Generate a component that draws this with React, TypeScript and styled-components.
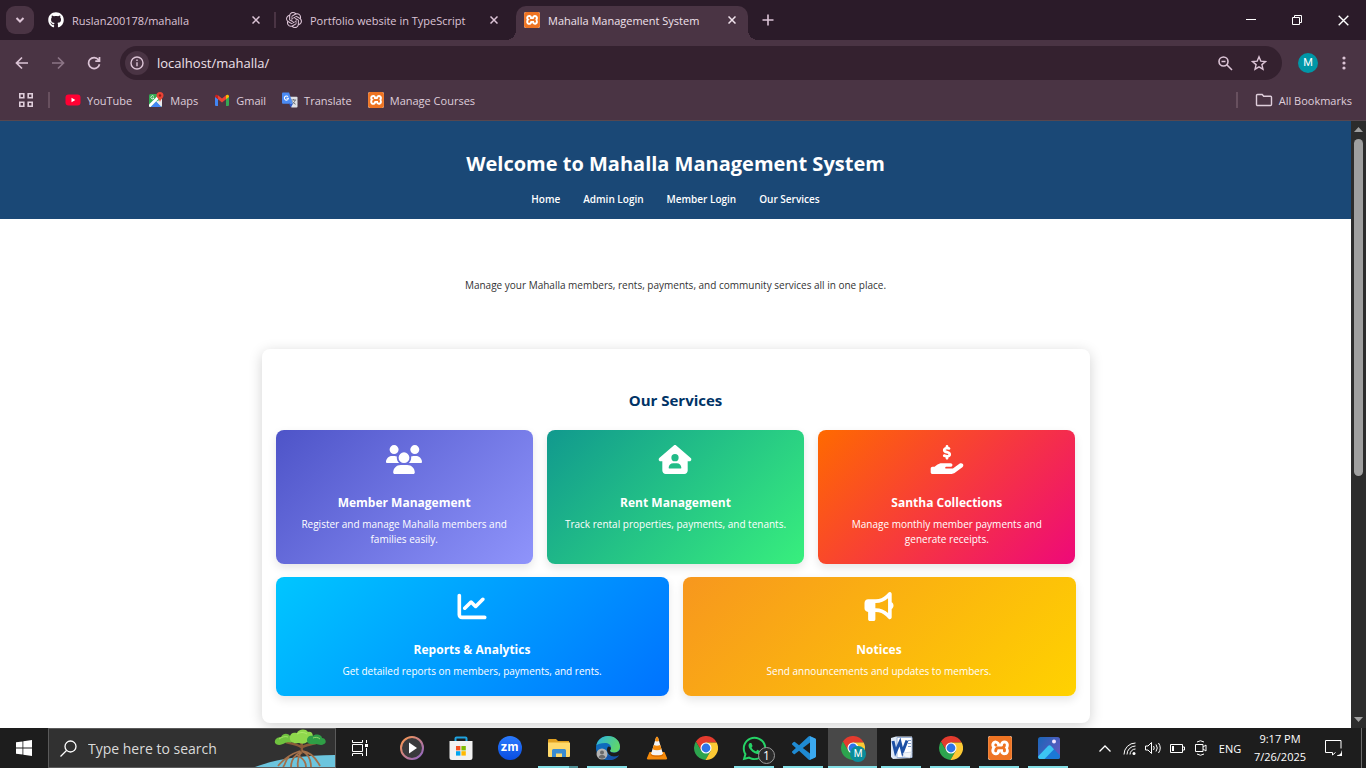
import React from "react";
import styled, { createGlobalStyle, css } from "styled-components";
import {
  FaUsers,
  FaHouseUser,
  FaHandHoldingDollar,
  FaChartLine,
  FaBullhorn,
  FaGithub,
  FaWhatsapp,
} from "react-icons/fa6";
import { SiOpenai, SiXampp } from "react-icons/si";

const uiFont = `"Open Sans", "Noto Sans", sans-serif`;

const GlobalStyle = createGlobalStyle`
  * { box-sizing: border-box; }
  body { margin: 0; background: #fff; font-family: ${uiFont}; }
  button, input { font-family: inherit; }
  button { border: 0; padding: 0; background: none; color: inherit; display: flex; align-items: center; justify-content: center; flex: none; }
  svg { display: block; flex: none; }
  h1, h2, h3, p { margin: 0; }
`;

const Desktop = styled.div`
  display: flex;
  flex-direction: column;
  height: 100vh;
  overflow: hidden;
`;

/* ---------- browser window ---------- */

const TabStrip = styled.div`
  display: flex;
  align-items: flex-end;
  height: 40px;
  flex: none;
  padding-left: 6px;
  background: #2b1b29;
  color: #dcc4d6;
`;

const TabSearch = styled.button`
  width: 28px;
  height: 28px;
  margin: 0 6px 6px 0;
  border-radius: 9px;
  background: #4a3444;
`;

const Tab = styled.div<{ $active?: boolean; $divided?: boolean }>`
  position: relative;
  display: flex;
  align-items: center;
  width: 232px;
  height: 34px;
  margin-right: 6px;
  padding: 0 8px 6px;
  gap: 8px;
  font-size: 11px;
  white-space: nowrap;
  ${(p) =>
    p.$active &&
    css`
      background: #4a3444;
      color: #f0e2ec;
      border-radius: 10px 10px 0 0;
      &::before,
      &::after {
        content: "";
        position: absolute;
        bottom: 0;
        width: 10px;
        height: 10px;
      }
      &::before {
        left: -10px;
        background: radial-gradient(circle at 0 0, transparent 10px, #4a3444 10px);
      }
      &::after {
        right: -10px;
        background: radial-gradient(circle at 100% 0, transparent 10px, #4a3444 10px);
      }
    `}
  ${(p) =>
    p.$divided &&
    css`
      &::after {
        content: "";
        position: absolute;
        right: -4px;
        top: 6px;
        width: 2px;
        height: 16px;
        background: #4a3444;
      }
    `}
`;

const TabTitle = styled.span`
  flex: 1;
  overflow: hidden;
`;

const TabClose = styled.button`
  width: 16px;
  height: 16px;
`;

const NewTab = styled.button`
  width: 28px;
  height: 28px;
  margin-bottom: 6px;
`;

const WindowControls = styled.div`
  display: flex;
  margin-left: auto;
  align-self: stretch;
  color: #fff;
  button {
    width: 46px;
  }
`;

const Toolbar = styled.div`
  display: flex;
  align-items: center;
  height: 46px;
  flex: none;
  padding: 0 4px;
  background: #4a3444;
  color: #dcc4d6;
`;

const ToolButton = styled.button<{ $dim?: boolean }>`
  width: 36px;
  height: 34px;
  opacity: ${(p) => (p.$dim ? 0.45 : 1)};
`;

const Omnibox = styled.div`
  display: flex;
  align-items: center;
  flex: 1;
  height: 34px;
  margin: 0 8px;
  padding: 0 7px 0 5px;
  border-radius: 17px;
  background: #34212f;
`;

const SiteInfo = styled.button`
  width: 24px;
  height: 24px;
  border-radius: 50%;
  background: #4a3444;
`;

const Address = styled.input`
  flex: 1;
  min-width: 0;
  margin-left: 8px;
  padding: 0;
  border: 0;
  outline: 0;
  background: none;
  color: #efe2eb;
  font-size: 13px;
`;

const OmniButton = styled.button`
  width: 33px;
  height: 28px;
`;

const Avatar = styled.span`
  width: 20px;
  height: 20px;
  border-radius: 50%;
  background: #0097a7;
  color: #fff;
  font: 400 11px/20px Roboto, sans-serif;
  text-align: center;
`;

const BookmarksBar = styled.nav`
  display: flex;
  align-items: center;
  height: 35px;
  flex: none;
  padding: 0 14px 6px 18px;
  background: #4a3444;
  border-bottom: 1px solid #57474f;
  color: #dfcedb;
  font-size: 11px;
`;

const Divider = styled.span<{ $push?: boolean }>`
  width: 2px;
  height: 16px;
  margin-left: ${(p) => (p.$push ? "auto" : "14px")};
  margin-right: ${(p) => (p.$push ? "9px" : "7px")};
  background: #68505f;
`;

const Bookmark = styled.a`
  display: flex;
  align-items: center;
  gap: 6px;
  padding: 0 8px;
  color: inherit;
  text-decoration: none;
  white-space: nowrap;
  &:last-child {
    padding-right: 0;
  }
`;

const XamppTile = styled.span<{ $size: number }>`
  display: flex;
  flex: none;
  width: ${(p) => p.$size}px;
  height: ${(p) => p.$size}px;
  border-radius: 2px;
  overflow: hidden;
  background: #fff;
  color: #ee7423;
  svg {
    width: 100%;
    height: 100%;
  }
`;

/* ---------- page ---------- */

const Viewport = styled.div`
  display: flex;
  flex: 1;
  min-height: 0;
`;

const Page = styled.div`
  flex: 1;
  min-width: 0;
  overflow: hidden;
  text-align: center;
`;

const PageHeader = styled.header`
  padding: 28px 16px 12px;
  background: #1a4876;
  color: #fff;
`;

const PageTitle = styled.h1`
  font-size: 20px;
  line-height: 30px;
  font-weight: 700;
`;

const PageNav = styled.nav`
  display: flex;
  justify-content: center;
  gap: 23px;
  margin-top: 12px;
  font-size: 10px;
  line-height: 16px;
  font-weight: 600;
  a {
    color: inherit;
    text-decoration: none;
  }
`;

const Intro = styled.p`
  padding: 58px 16px 56px;
  color: #333;
  font-size: 10px;
  line-height: 16px;
`;

const Services = styled.section`
  max-width: 828px;
  margin: 0 auto;
  padding: 40px 14px 27px;
  border-radius: 8px;
  background: #fff;
  box-shadow: 0 3px 14px rgba(0, 0, 0, 0.18);
`;

const SectionTitle = styled.h2`
  margin-bottom: 19px;
  color: #003366;
  font-size: 15px;
  line-height: 22px;
  font-weight: 700;
`;

const CardGrid = styled.div`
  display: flex;
  flex-wrap: wrap;
  gap: 13px 14px;
`;

const Card = styled.article<{ $from: string; $to: string }>`
  flex: 1 1 250px;
  padding: 15px 14px 17px;
  border-radius: 8px;
  background: linear-gradient(135deg, ${(p) => p.$from}, ${(p) => p.$to});
  box-shadow: 0 4px 10px rgba(0, 0, 0, 0.1);
  color: #fff;
  svg {
    width: 36px;
    height: 29px;
    margin: 0 auto 20px;
  }
`;

const CardTitle = styled.h3`
  font-size: 12px;
  line-height: 18px;
  font-weight: 700;
`;

const CardText = styled.p`
  margin-top: 5px;
  font-size: 10px;
  line-height: 15px;
`;

const Scrollbar = styled.div`
  display: flex;
  flex-direction: column;
  align-items: center;
  justify-content: space-between;
  width: 15px;
  flex: none;
  padding: 6px 0;
  background: #2c2c2c;
  color: #9f9f9f;
`;

const ScrollTrack = styled.div`
  flex: 1;
  width: 9px;
  margin: 7px 0;
`;

const ScrollThumb = styled.div`
  height: 59%;
  border-radius: 5px;
  background: #9f9f9f;
`;

/* ---------- taskbar ---------- */

const Taskbar = styled.footer`
  display: flex;
  align-items: stretch;
  height: 40px;
  flex: none;
  background: #1d1d1d;
  color: #fff;
`;

const StartButton = styled.button`
  width: 48px;
`;

const SearchBox = styled.label`
  display: flex;
  align-items: center;
  width: 288px;
  padding-left: 11px;
  border: 1px solid #5a5a5a;
  background: #313131;
`;

const SearchInput = styled.input`
  flex: 1;
  min-width: 0;
  margin-left: 11px;
  padding: 0;
  border: 0;
  outline: 0;
  background: none;
  color: #dadada;
  font-size: 14px;
  &::placeholder {
    color: #dadada;
    opacity: 1;
  }
`;

const TaskViewButton = styled.button`
  width: 48px;
  margin-right: 3px;
`;

const AppButton = styled.button<{ $state?: "open" | "active" | "stacked" }>`
  position: relative;
  width: 49px;
  ${(p) => p.$state === "active" && "background: #484848;"}
  ${(p) =>
    p.$state &&
    css`
      &::after {
        content: "";
        position: absolute;
        left: ${p.$state === "active" ? "0" : "4px"};
        right: ${p.$state === "active" ? "0" : "5px"};
        bottom: 0;
        height: 2px;
        background: ${p.$state === "stacked" ? "linear-gradient(90deg, #84dfe6 31px, #4f9096 31px)" : "#84dfe6"};
      }
    `}
`;

const ZoomBadge = styled.span`
  width: 24px;
  height: 24px;
  border-radius: 50%;
  background: linear-gradient(#2a7bff, #0a4de0);
  font: 700 12px/22px Inter, sans-serif;
`;

const CountBadge = styled.span`
  position: absolute;
  left: 28px;
  top: 19px;
  width: 17px;
  height: 17px;
  border: 1px solid #9a9a9a;
  border-radius: 50%;
  background: #2a2a2a;
  font-size: 12px;
  line-height: 15px;
`;

const ProfileBadge = styled.span`
  position: absolute;
  left: 22px;
  top: 18px;
  width: 16px;
  height: 16px;
  border-radius: 50%;
  background: #0b8d9b;
  font: 400 10px/16px Roboto, sans-serif;
`;

const Tray = styled.div`
  display: flex;
  align-items: center;
  margin-left: auto;
  font-size: 11px;
  button {
    width: 24px;
    height: 40px;
  }
`;

const Language = styled.span`
  width: 34px;
  text-align: center;
`;

const Clock = styled.time`
  display: flex;
  flex-direction: column;
  width: 66px;
  text-align: center;
  line-height: 18px;
`;

const NoticeButton = styled.span`
  display: flex;
  justify-content: center;
  width: 40px;
`;

const ShowDesktop = styled.span`
  width: 5px;
  height: 40px;
  margin-left: 8px;
  border-left: 1px solid #6b6b6b;
`;

/* ---------- icons ---------- */

const CloseIcon = ({ size = 8, weight = 1.5 }: { size?: number; weight?: number }) => (
  <svg width={size} height={size} viewBox="0 0 8 8" stroke="currentColor" strokeWidth={weight} fill="none">
    <path d="M.5.5l7 7M7.5.5l-7 7" />
  </svg>
);

const Xampp = ({ size }: { size: number }) => (
  <XamppTile $size={size}>
    <SiXampp />
  </XamppTile>
);

const YouTubeIcon = () => (
  <svg width="16" height="16" viewBox="0 0 16 16">
    <rect x="0.5" y="2.5" width="15" height="11" rx="3" fill="#ff0033" />
    <path d="M6.5 5.8v4.4L10.3 8z" fill="#fff" />
  </svg>
);

const MapsIcon = () => (
  <svg width="16" height="16" viewBox="0 0 16 16">
    <rect x="1" y="2" width="13" height="13" rx="1.5" fill="#34a853" />
    <path d="M14 7v6.500a1.500 1.500 0 0 1-1.500 1.500L8 9.500z" fill="#e8eaed" />
    <path d="M2.500 15L8 9.500l5.500 5.500z" fill="#4285f4" />
    <path d="M1 12.500L10.500 3l2 2L2.500 15H2a1 1 0 0 1-1-1z" fill="#fff" />
    <path d="M5.800 4.400A1.600 1.600 0 1 0 6 6H4.700" fill="none" stroke="#fff" strokeWidth="0.800" />
    <path d="M12 0a3.500 3.500 0 0 0-3.500 3.500C8.500 6 11 6.500 12 10c1-3.500 3.500-4 3.500-6.500A3.500 3.500 0 0 0 12 0z" fill="#ea4335" />
    <circle cx="12" cy="3.500" r="1.200" fill="#8c1d18" />
  </svg>
);

const GmailIcon = () => (
  <svg width="16" height="16" viewBox="0 0 16 16">
    <path d="M1 4.500v8.500a1 1 0 0 0 1 1h2V7z" fill="#4285f4" />
    <path d="M15 4.500v8.500a1 1 0 0 1-1 1h-2V7z" fill="#34a853" />
    <path d="M4 3.300L8 6.500l4-3.200v4L8 10.400 4 7.300z" fill="#ea4335" />
    <path d="M1 4.500C1 2.800 2.800 2.300 4 3.300v4L1 5z" fill="#c5221f" />
    <path d="M15 4.500c0-1.700-1.800-2.200-3-1.200v4L15 5z" fill="#fbbc04" />
  </svg>
);

const TranslateIcon = () => (
  <svg width="16" height="16" viewBox="0 0 17 16">
    <path d="M6 4.500h9.500a1 1 0 0 1 1 1V15a1 1 0 0 1-1 1H10z" fill="#dfe1e5" />
    <path d="M9.500 8h5.500M12.300 7v1M14 8c-.5 2-2 3.500-3.500 4.500M11 9.500c.8 1.500 2 2.500 3.500 3" stroke="#5f6368" strokeWidth="0.9" fill="none" />
    <path d="M1 0h6.500l4 12H1a1 1 0 0 1-1-1V1a1 1 0 0 1 1-1z" fill="#4a8af4" />
    <path d="M7.500 12h4L9.500 16z" fill="#2a56c6" />
    <path d="M6.400 4.500A2.200 2.200 0 1 0 6.900 6.200H4.800" fill="none" stroke="#fff" strokeWidth="1.100" />
  </svg>
);

const ChromeIcon = () => (
  <svg width="24" height="24" viewBox="0 0 24 24">
    <path d="M1.900 5.520A12 12 0 0 1 22.670 6.500H12V12l-4.760 2.750z" fill="#e33b2e" />
    <path d="M1.900 5.520L7.240 14.750 12 12l4.760 2.750-5.330 9.240A12 12 0 0 1 1.900 5.520z" fill="#2da44e" />
    <path d="M22.670 6.500A12 12 0 0 1 11.430 23.990l5.330-9.240L12 12V6.500z" fill="#fcc934" />
    <circle cx="12" cy="12" r="5.500" fill="#fff" />
    <circle cx="12" cy="12" r="4.400" fill="#2f74e8" />
  </svg>
);

const MediaIcon = () => (
  <svg width="24" height="24" viewBox="0 0 24 24">
    <defs>
      <linearGradient id="media" x1="0" y1="0" x2="1" y2="1">
        <stop offset="0" stopColor="#ff9a4d" />
        <stop offset="1" stopColor="#8a63c9" />
      </linearGradient>
    </defs>
    <circle cx="12" cy="12" r="11" fill="#3a3a3c" stroke="url(#media)" strokeWidth="2" />
    <path d="M9 6.500v11l8-5.500z" fill="#fff" />
  </svg>
);

const StoreIcon = () => (
  <svg width="24" height="24" viewBox="0 0 24 24">
    <path d="M6.500 6V2.500a1 1 0 0 1 1-1h9a1 1 0 0 1 1 1V6" fill="none" stroke="#1fa3e0" strokeWidth="2" />
    <path d="M.5 5h23v16.500a2.500 2.500 0 0 1-2.500 2.500H3a2.500 2.500 0 0 1-2.500-2.500z" fill="#f1f1f1" />
    <path d="M7 10h4.400v4.400H7z" fill="#f25022" />
    <path d="M12.400 10h4.400v4.400h-4.400z" fill="#7fba00" />
    <path d="M7 15.200h4.400v4.400H7z" fill="#00a4ef" />
    <path d="M12.400 15.200h4.400v4.400h-4.400z" fill="#ffb900" />
  </svg>
);

const ExplorerIcon = () => (
  <svg width="24" height="24" viewBox="0 0 24 24">
    <path d="M1 4a1 1 0 0 1 1-1h7l2 2h11v5H1z" fill="#e0a020" />
    <path d="M1 6.500h22V20a1 1 0 0 1-1 1H2a1 1 0 0 1-1-1z" fill="#ffd96b" />
    <path d="M5 21v-6.500a1.500 1.500 0 0 1 1.500-1.500h11a1.500 1.500 0 0 1 1.500 1.500V21h-4v-3.500H9V21z" fill="#3a8bd0" />
  </svg>
);

const EdgeIcon = () => (
  <svg width="24" height="24" viewBox="0 0 24 24">
    <defs>
      <linearGradient id="edgeTop" x1="0" y1="0" x2="1" y2="0.400">
        <stop offset="0" stopColor="#2bb3e6" />
        <stop offset="1" stopColor="#5fd66b" />
      </linearGradient>
    </defs>
    <circle cx="12" cy="12" r="12" fill="#0f6bbd" />
    <path d="M.3 9.500C1.500 4 6 0 12 0c7 0 12 5 12 10.500 0 4-3 6-6 6-2.500 0-4-1-4-2 0-.7 1-1 1-2.700C15 9 12.500 7 9 7 5 7 1.500 8 .3 9.500z" fill="url(#edgeTop)" />
    <path d="M9 12c0 5 3 8.500 8 8.500 2 0 3.500-.5 5-1.500l1 .5A12 12 0 0 1 12 24c-3-2-5-7-3-12z" fill="#1552a8" />
    <path d="M12.500 10.500c1.500 0 2.400.8 2.400 2 0 1.200-.9 1.500-.9 2.300 0 1.200 1.700 2 4 2 2.300 0 4.500-1 6-3v4.500c-1 1-3 2.200-6 2.200-4 0-7-3-7-6.500 0-1.700.5-3 1.500-3.500z" fill="#1d1d1d" />
    <circle cx="6" cy="18" r="5.500" fill="#b4b4b4" />
    <circle cx="6" cy="16.500" r="2" fill="#6a6a6a" />
    <path d="M2.500 21.500c.5-2 2-2.500 3.500-2.500s3 .5 3.500 2.500C7.500 23 4.500 23 2.500 21.500z" fill="#6a6a6a" />
  </svg>
);

const VlcIcon = () => (
  <svg width="22" height="24" viewBox="0 0 22 24">
    <path d="M3.500 16h15l2.500 6a1 1 0 0 1-1 1.500H2A1 1 0 0 1 1 22z" fill="#f58a0a" />
    <path d="M10 1.500c.3-1 1.700-1 2 0L17 18c-2 2-10 2-12 0z" fill="#f4f4f4" />
    <path d="M10 1.500c.3-1 1.700-1 2 0l1 3.500c-1 .6-3 .6-4 0zM7.800 9c2 1 4.400 1 6.400 0l1.300 4.200c-2.500 1.400-6.500 1.400-9 0z" fill="#f58a0a" />
    <path d="M5 18c2 2 10 2 12 0l.3 1.200c-2.500 2.200-10 2.200-12.600 0z" fill="#d96c00" />
  </svg>
);

const VsCodeIcon = () => (
  <svg width="24" height="24" viewBox="0 0 24 24">
    <path
      d="M23.150 2.587L18.210.210a1.494 1.494 0 0 0-1.705.290l-9.460 8.630-4.120-3.128a.999.999 0 0 0-1.276.057L.327 7.261A1 1 0 0 0 .326 8.740L3.899 12 .326 15.260a1 1 0 0 0 .001 1.479L1.650 17.940a.999.999 0 0 0 1.276.057l4.120-3.128 9.460 8.630a1.492 1.492 0 0 0 1.704.290l4.942-2.377A1.500 1.500 0 0 0 24 20.060V3.939a1.500 1.500 0 0 0-.850-1.352zm-5.146 14.861L10.826 12l7.178-5.448v10.896z"
      fill="#1f8ad2"
    />
    <path d="M18 .2l5.150 2.387A1.500 1.500 0 0 1 24 3.940v16.120a1.500 1.500 0 0 1-.850 1.350L18 23.800z" fill="#3ba9f0" />
  </svg>
);

const WordIcon = () => (
  <svg width="24" height="24" viewBox="0 0 24 24">
    <path d="M1 2l5-1.500h16V22l-19 1L1 21z" fill="#dfe8f5" />
    <path d="M7 1.500h15v20H7z" fill="#fff" stroke="#9db4d8" />
    <path d="M18 4.500h3M18 7.500h3M18 10.500h3" stroke="#7b98c8" />
    <path d="M3 5l2.500 11L10 6l2.500 10L17 4.500" fill="none" stroke="#1d50a5" strokeWidth="3" />
    <path d="M13 17l9-1-2 6-6-1z" fill="#f2f5fa" stroke="#a9b9d2" strokeWidth="0.500" />
  </svg>
);

const PhotosIcon = () => (
  <svg width="24" height="24" viewBox="0 0 24 24">
    <defs>
      <linearGradient id="photo" x1="0" y1="0" x2="1" y2="0.600">
        <stop offset="0" stopColor="#1966b8" />
        <stop offset="1" stopColor="#5f5ac0" />
      </linearGradient>
    </defs>
    <rect x="1" y="1" width="22" height="22" rx="2.500" fill="url(#photo)" />
    <circle cx="17" cy="5.500" r="2" fill="#f3e6ff" />
    <path d="M1.500 20L11 10q1.500-1.500 3 0l9 9.500V21a2 2 0 0 1-2 2H3a2 2 0 0 1-1.500-3z" fill="#1b78d6" />
    <path d="M1.500 20L11 10q1.500-1.500 3 0l3 3.200L7.500 23H3a2 2 0 0 1-1.500-3z" fill="#3cc4f2" />
  </svg>
);

const TreeArt = () => (
  <svg width="80" height="38" viewBox="0 0 80 38">
    <path d="M0 38C18 31 45 26 80 26v12z" fill="#6cc5de" />
    <path d="M46 13c2 5 1 8 0 12M46 18c-4-3-9-3-15-5M47 18c5-2 10-3 14-4" stroke="#8a5a38" strokeWidth="2.500" fill="none" />
    <path d="M45 22c-6 2-14 5-22 15M46 23c-8 4-10 9-10 15M46 23c-3 5-4 9-3 15M47 22c6 3 9 9 9 16M47 22c8 1 14 7 18 15M41 26c8 3 10 8 10 12M34 28c-4 3-3 7-6 10" stroke="#a3704a" strokeWidth="1.800" fill="none" />
    <path d="M20 14c-1-4 3-6 6-6 2-4 7-4 9-1 5-1 6 3 4 5-3 3-6 0-9 2-3 2-8 3-10 0z" fill="#6fc13f" />
    <path d="M35 8c0-4 4-5 7-4 1-4 9-5 11-1 4-1 6 3 4 6 2 3-2 5-5 4-3 3-7 1-9 1-5 1-9-2-8-6z" fill="#8fd84c" />
    <path d="M52 11c0-4 4-5 6-4 3-3 9-1 9 2 4 0 5 5 2 6-3 2-6 0-8 0-5 1-9 0-9-4z" fill="#2f9e46" />
    <path d="M24 10c3-2 6-3 9-2M42 5c3-2 7-2 10 0M58 9c2-1 5-1 7 1" stroke="#b9ee78" fill="none" opacity="0.700" />
  </svg>
);

/* ---------- data ---------- */

const tabs = [
  { title: "Ruslan200178/mahalla", icon: <FaGithub size={16} color="#fff" />, divided: true },
  { title: "Portfolio website in TypeScript", icon: <SiOpenai size={16} /> },
  { title: "Mahalla Management System", icon: <Xampp size={16} />, active: true },
];

const bookmarks = [
  { label: "YouTube", icon: <YouTubeIcon /> },
  { label: "Maps", icon: <MapsIcon /> },
  { label: "Gmail", icon: <GmailIcon /> },
  { label: "Translate", icon: <TranslateIcon /> },
  { label: "Manage Courses", icon: <Xampp size={16} /> },
];

const services = [
  { title: "Member Management", text: "Register and manage Mahalla members and families easily.", icon: <FaUsers />, from: "#4e54c8", to: "#8f94fb" },
  { title: "Rent Management", text: "Track rental properties, payments, and tenants.", icon: <FaHouseUser />, from: "#11998e", to: "#38ef7d" },
  { title: "Santha Collections", text: "Manage monthly member payments and generate receipts.", icon: <FaHandHoldingDollar />, from: "#ff6a00", to: "#ee0979" },
  { title: "Reports & Analytics", text: "Get detailed reports on members, payments, and rents.", icon: <FaChartLine />, from: "#00c6ff", to: "#0072ff" },
  { title: "Notices", text: "Send announcements and updates to members.", icon: <FaBullhorn />, from: "#f7971e", to: "#ffd200" },
];

const apps: { name: string; icon: React.ReactNode; state?: "open" | "active" | "stacked" }[] = [
  { name: "Media Player", icon: <MediaIcon /> },
  { name: "Microsoft Store", icon: <StoreIcon /> },
  { name: "Zoom", icon: <ZoomBadge>zm</ZoomBadge> },
  { name: "File Explorer", icon: <ExplorerIcon />, state: "stacked" },
  { name: "Edge", icon: <EdgeIcon />, state: "open" },
  { name: "VLC", icon: <VlcIcon /> },
  { name: "Chrome", icon: <ChromeIcon /> },
  { name: "WhatsApp", icon: <><FaWhatsapp size={27} color="#25d366" /><CountBadge>1</CountBadge></>, state: "open" },
  { name: "Visual Studio Code", icon: <VsCodeIcon />, state: "open" },
  { name: "Chrome, profile M", icon: <><ChromeIcon /><ProfileBadge>M</ProfileBadge></>, state: "active" },
  { name: "Word", icon: <WordIcon />, state: "open" },
  { name: "Chrome window", icon: <ChromeIcon />, state: "open" },
  { name: "XAMPP", icon: <Xampp size={24} />, state: "open" },
  { name: "Photos", icon: <PhotosIcon />, state: "open" },
];

const stroke = { fill: "none", stroke: "currentColor" } as const;

export default function App() {
  return (
    <Desktop>
      <GlobalStyle />

      <TabStrip>
        <TabSearch aria-label="Search tabs">
          <svg width="10" height="10" viewBox="0 0 10 10" {...stroke} strokeWidth="2"><path d="M1.500 3L5 6.500 8.500 3" /></svg>
        </TabSearch>
        {tabs.map((t) => (
          <Tab key={t.title} $active={t.active} $divided={t.divided}>
            {t.icon}
            <TabTitle>{t.title}</TabTitle>
            <TabClose aria-label="Close tab"><CloseIcon /></TabClose>
          </Tab>
        ))}
        <NewTab aria-label="New tab">
          <svg width="12" height="12" viewBox="0 0 12 12" {...stroke} strokeWidth="1.600"><path d="M6 .5v11M.5 6h11" /></svg>
        </NewTab>
        <WindowControls>
          <button aria-label="Minimize">
            <svg width="10" height="10" viewBox="0 0 10 10" {...stroke}><path d="M0 4.500h10" /></svg>
          </button>
          <button aria-label="Restore">
            <svg width="10" height="10" viewBox="0 0 10 10" {...stroke}><path d="M.5 2.500h7v7h-7zM2.500 2.500v-2h7v7h-2" /></svg>
          </button>
          <button aria-label="Close window"><CloseIcon size={11} weight={1} /></button>
        </WindowControls>
      </TabStrip>

      <Toolbar>
        <ToolButton aria-label="Back">
          <svg width="14" height="14" viewBox="0 0 14 14" {...stroke} strokeWidth="1.700"><path d="M13 7H2M7 1.500L1.500 7 7 12.500" /></svg>
        </ToolButton>
        <ToolButton aria-label="Forward" $dim>
          <svg width="14" height="14" viewBox="0 0 14 14" {...stroke} strokeWidth="1.700"><path d="M1 7h11M7 1.500L12.500 7 7 12.500" /></svg>
        </ToolButton>
        <ToolButton aria-label="Reload">
          <svg width="14" height="14" viewBox="0 0 14 14" {...stroke} strokeWidth="1.700"><path d="M12.500 8.200A5.500 5.500 0 1 1 11.500 3.700L12.500 5M12.500 1v4.200H8.300" /></svg>
        </ToolButton>
        <Omnibox>
          <SiteInfo aria-label="Site information">
            <svg width="14" height="14" viewBox="0 0 14 14" {...stroke} strokeWidth="1.400"><circle cx="7" cy="7" r="6" /><path d="M7 6.200v4M7 3.500v1.500" /></svg>
          </SiteInfo>
          <Address aria-label="Address" defaultValue="localhost/mahalla/" />
          <OmniButton aria-label="Zoom">
            <svg width="15" height="15" viewBox="0 0 15 15" {...stroke} strokeWidth="1.600"><circle cx="5.500" cy="5.500" r="4.500" /><path d="M8.800 8.800L14 14M3.500 5.500h4" /></svg>
          </OmniButton>
          <OmniButton aria-label="Bookmark this tab">
            <svg width="16" height="16" viewBox="0 0 16 16" {...stroke} strokeWidth="1.400"><path d="M8 1.800l1.800 4.300 4.700.4-3.600 3.100 1.100 4.600L8 11.800l-4 2.400 1.100-4.600L1.500 6.500l4.700-.4z" /></svg>
          </OmniButton>
        </Omnibox>
        <ToolButton aria-label="Profile"><Avatar>M</Avatar></ToolButton>
        <ToolButton aria-label="Menu">
          <svg width="4" height="14" viewBox="0 0 4 14" fill="currentColor"><circle cx="2" cy="2" r="1.600" /><circle cx="2" cy="7" r="1.600" /><circle cx="2" cy="12" r="1.600" /></svg>
        </ToolButton>
      </Toolbar>

      <BookmarksBar aria-label="Bookmarks">
        <button aria-label="Apps">
          <svg width="16" height="16" viewBox="0 0 16 16" {...stroke} strokeWidth="1.600"><path d="M1.800 1.800h4v4h-4zM10.200 1.800h4v4h-4zM1.800 10.200h4v4h-4zM10.200 10.200h4v4h-4z" /></svg>
        </button>
        <Divider />
        {bookmarks.map((b) => (
          <Bookmark href="#" key={b.label}>
            {b.icon}
            {b.label}
          </Bookmark>
        ))}
        <Divider $push />
        <Bookmark href="#">
          <svg width="18" height="16" viewBox="0 0 18 16" {...stroke} strokeWidth="1.400"><path d="M2.500 2.500h4.700l1.500 1.800h6.800a1 1 0 0 1 1 1v7.200a1 1 0 0 1-1 1h-13a1 1 0 0 1-1-1v-9a1 1 0 0 1 1-1z" /></svg>
          All Bookmarks
        </Bookmark>
      </BookmarksBar>

      <Viewport>
        <Page>
          <PageHeader>
            <PageTitle>Welcome to Mahalla Management System</PageTitle>
            <PageNav>
              <a href="#">Home</a>
              <a href="#">Admin Login</a>
              <a href="#">Member Login</a>
              <a href="#services">Our Services</a>
            </PageNav>
          </PageHeader>
          <Intro>Manage your Mahalla members, rents, payments, and community services all in one place.</Intro>
          <Services id="services">
            <SectionTitle>Our Services</SectionTitle>
            <CardGrid>
              {services.map((s) => (
                <Card key={s.title} $from={s.from} $to={s.to}>
                  {s.icon}
                  <CardTitle>{s.title}</CardTitle>
                  <CardText>{s.text}</CardText>
                </Card>
              ))}
            </CardGrid>
          </Services>
        </Page>
        <Scrollbar>
          <svg width="9" height="5" viewBox="0 0 9 5" fill="currentColor"><path d="M0 5L4.500 0 9 5z" /></svg>
          <ScrollTrack><ScrollThumb /></ScrollTrack>
          <svg width="9" height="5" viewBox="0 0 9 5" fill="currentColor"><path d="M0 0l4.500 5L9 0z" /></svg>
        </Scrollbar>
      </Viewport>

      <Taskbar>
        <StartButton aria-label="Start">
          <svg width="16" height="16" viewBox="0 0 16 16" fill="#fff"><path d="M0 2.300L6.500 1.400v6.200H0zM7.300 1.300L16 0v7.600H7.300zM0 8.400h6.500v6.200L0 13.700zM7.300 8.400H16V16l-8.700-1.300z" /></svg>
        </StartButton>
        <SearchBox>
          <svg width="17" height="17" viewBox="0 0 17 17" {...stroke} strokeWidth="1.300"><circle cx="10.500" cy="6.500" r="5.500" /><path d="M6.500 10.500L.5 16.500" /></svg>
          <SearchInput aria-label="Search" placeholder="Type here to search" />
          <TreeArt />
        </SearchBox>
        <TaskViewButton aria-label="Task View">
          <svg width="17" height="16" viewBox="0 0 17 16" {...stroke}><path d="M.5 0v2.500h10V0M.5 16v-2.500h10V16M.5 4.500h10v7H.5zM14.500 0v3M14.500 8v8" /><path d="M13 4h3v3h-3z" fill="currentColor" stroke="none" /></svg>
        </TaskViewButton>
        {apps.map((a) => (
          <AppButton key={a.name} aria-label={a.name} $state={a.state}>
            {a.icon}
          </AppButton>
        ))}
        <Tray>
          <button aria-label="Show hidden icons">
            <svg width="12" height="7" viewBox="0 0 12 7" {...stroke} strokeWidth="1.300"><path d="M.5 6.500L6 1l5.500 5.500" /></svg>
          </button>
          <button aria-label="Network">
            <svg width="13" height="13" viewBox="0 0 13 13" {...stroke}><path d="M1 12.500A11.500 11.500 0 0 1 12.500 1M4 12.500A8.500 8.500 0 0 1 12.500 4M7 12.500A5.500 5.500 0 0 1 12.500 7" /><circle cx="11" cy="11.500" r="1.500" fill="currentColor" stroke="none" /></svg>
          </button>
          <button aria-label="Volume">
            <svg width="17" height="14" viewBox="0 0 17 14" {...stroke}><path d="M.5 5h2.500l3.500-3.500v11L3 9H.5zM8.500 5q1.500 2 0 4M11 3.500q2.500 3.500 0 7M13.500 2q3.500 5 0 10" /></svg>
          </button>
          <button aria-label="Battery">
            <svg width="15" height="9" viewBox="0 0 15 9" {...stroke}><path d="M.5.5h12v8H.5zM13 3h1.500v3H13" /><path d="M2 2h2v5H2z" fill="currentColor" stroke="none" /></svg>
          </button>
          <button aria-label="Meet Now">
            <svg width="12" height="16" viewBox="0 0 12 16" {...stroke}><path d="M.5 4.500h7.500v7H.5zM8 7l3-2v6L8 9M2 2q3.500-2.500 7 0M2 14q3.500 2.500 7 0" /></svg>
          </button>
          <Language>ENG</Language>
          <Clock>
            <span>9:17 PM</span>
            <span>7/26/2025</span>
          </Clock>
          <NoticeButton>
            <svg width="17" height="16" viewBox="0 0 17 16" {...stroke}><path d="M10.500 12.500l-3 2.500v-2.500H.5V.5h15.500v8" /><path d="M16.500 10.500a3.500 3.500 0 1 1-4.500 4.500 4 4 0 0 0 4.500-4.500z" fill="currentColor" stroke="none" /></svg>
          </NoticeButton>
          <ShowDesktop />
        </Tray>
      </Taskbar>
    </Desktop>
  );
}
